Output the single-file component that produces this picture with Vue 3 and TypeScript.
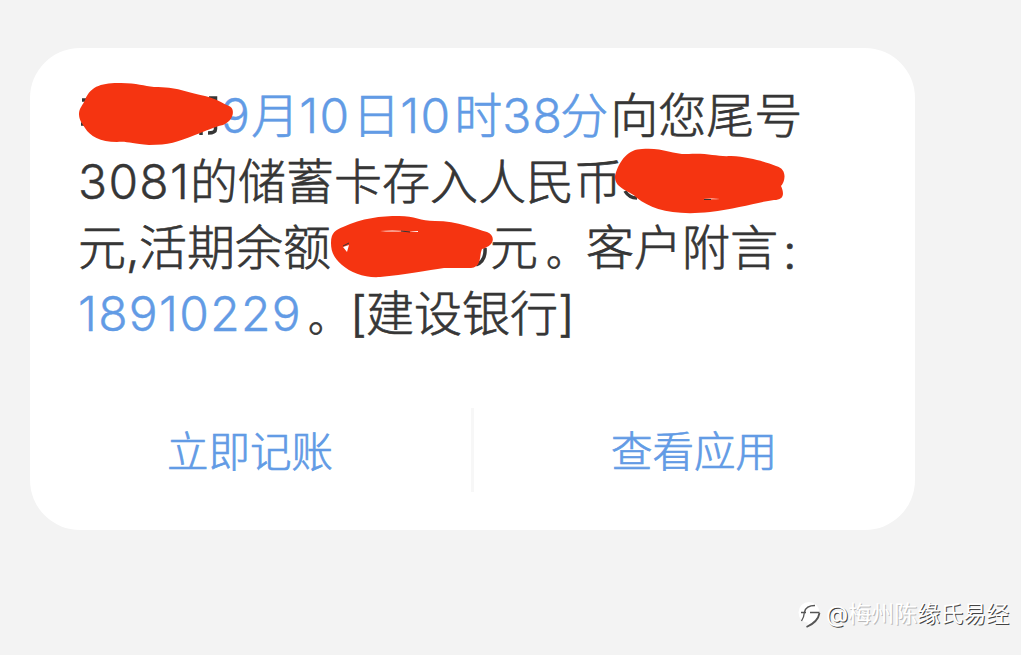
<template>
  <div class="page">
    <section class="card">
      <div class="message">
        <div v-for="(line, i) in lines" :key="i" class="line">
          <span
            v-for="(part, j) in line"
            :key="j"
            class="part"
            :class="part.kinds"
            :style="{ width: part.width + 'px' }"
            >{{ part.text }}</span
          >
        </div>
        <svg class="marks" viewBox="0 0 885 320" aria-hidden="true">
          <g class="stroke">
            <path d="M52 52H60M51 76H58M161 84L168 79M171 78V87M185.5 72V81Q185.5 85 178 85M179 50H185.5V57" />
            <path d="M595 143Q599 150 607 150M600 131V127M455 200Q456 213 446 217" />
          </g>
          <g class="red">
            <path
              d="M49 66C49 60 53 57 55 52C61 37 73 35 91 35C107 35 114 38 124 39C147 39 156 44 175 48C185 50 194 56 199 58C205 60 205 72 193 77C184 79 176 83 165 87C147 94 139 97 119 97C102 96 98 93 87 94C70 94 60 88 55 80C52 75 49 72 49 66Z"
            />
            <path
              d="M585 128C589 112 599 101 612 101C632 99 644 107 659 106C679 105 687 109 701 108C721 109 735 114 746 118C758 121 755 134 751 138C755 147 753 152 744 152C728 154 706 161 680 164C643 168 621 161 607 150C601 143 584 141 585 128Z"
            />
            <path
              d="M301 195C301 184 306 182 313 179C332 170 351 168 369 168C385 168 390 173 405 173C428 173 446 181 457 184C465 187 466 197 452 201C449 208 452 219 441 220L414 220C398 222 375 227 350 229C335 230 321 225 312 217C304 210 301 204 301 195Z"
            />
          </g>
          <path
            class="gap"
            d="M673 151Q682 150 690 151Q682 151.500 673 151ZM350 183Q362 182 375 183Q362 184 350 183ZM379 184Q386 183 388 183V184ZM313 199L319 197L317 204Z"
          />
          <path class="dark" d="M674 151.500H681M371 183L380 184M313 198L319 195" />
        </svg>
      </div>
      <div class="actions">
        <button type="button">立即记账</button>
        <i class="divider"></i>
        <button type="button">查看应用</button>
      </div>
    </section>
    <footer class="credit">
      <svg width="24" height="28" viewBox="0 0 24 28" aria-hidden="true">
        <circle class="disc" cx="11" cy="12.500" r="10.500" />
        <path class="disc" d="M10 22L9 27Q18 24 21 15Z" />
        <path class="edge" d="M3.500 21Q6 17 6.500 12Q8 5.500 17 5.500M3 12.500H8M12 12.500H21.500" />
        <path class="edge bold" d="M21.500 13Q20 22 8.500 27" />
      </svg>
      <span>@<span class="faint">梅州陈</span>缘氏易经</span>
    </footer>
  </div>
</template>

<script setup lang="ts">
interface Part {
  text: string;
  // width of the run in px, left out when the glyphs decide
  width?: number;
  kinds?: string[];
}

const lines: Part[][] = [
  [
    { text: '', width: 143 },
    { text: '9', kinds: ['link', 'digits'] },
    { text: '月', kinds: ['link'] },
    { text: '10', width: 53, kinds: ['link', 'digits'] },
    { text: '日', width: 48, kinds: ['link'] },
    { text: '10', width: 54, kinds: ['link', 'digits'] },
    { text: '时', width: 48, kinds: ['link'] },
    { text: '38', width: 58, kinds: ['link', 'digits'] },
    { text: '分', width: 50, kinds: ['link'] },
    { text: '向您尾号', width: 192 }
  ],
  [
    { text: '3081', width: 112, kinds: ['digits'] },
    { text: '的储蓄卡存入人民币', width: 432 }
  ],
  [
    { text: '元', width: 48 },
    { text: ',', width: 13 },
    { text: '活期余额', width: 192 },
    { text: '', width: 159 },
    { text: '元', width: 56 },
    { text: '。', width: 40, kinds: ['stop'] },
    { text: '客户附言', width: 197 },
    { text: ':', width: 20, kinds: ['colon'] }
  ],
  [
    { text: '18910229', width: 230, kinds: ['link', 'digits'] },
    { text: '。', width: 42, kinds: ['stop'] },
    { text: '[', width: 16 },
    { text: '建设银行', width: 192 },
    { text: ']', width: 18 }
  ]
];
</script>

<style>
body {
  background: #f3f3f3;
}
</style>

<style scoped>
.page {
  box-sizing: border-box;
  width: 1021px;
  height: 655px;
  padding: 48px 0 0 30px;
  overflow: hidden;
  background: #f3f3f3;
  font-family: Inter, 'Noto Sans CJK SC', sans-serif;
  font-weight: 300;
}

.card {
  box-sizing: border-box;
  width: 885px;
  height: 482px;
  padding-top: 35px;
  border-radius: 50px;
  background: #fff;
  -webkit-text-stroke: 0.7px currentColor;
}

.message {
  position: relative;
  height: 325px;
  padding-left: 48px;
  color: #363636;
  font-size: 48px;
}

.line {
  display: flex;
  height: 66px;
  line-height: 66px;
  white-space: nowrap;
}

.part {
  flex: none;
}

.link {
  color: #629be5;
}

.digits {
  letter-spacing: 1.3px;
  -webkit-text-stroke-width: 0.4px;
}

.stop {
  padding-top: 4px;
  font-size: 40px;
}

.colon {
  padding-top: 4px;
}

.marks {
  position: absolute;
  top: -35px;
  left: 0;
  width: 885px;
  height: 320px;
}

.stroke,
.dark {
  fill: none;
  stroke: #363636;
  stroke-width: 3.5;
}

.dark {
  stroke-width: 1;
}

.red {
  fill: #f53411;
}

.gap {
  fill: #fff;
}

.actions {
  display: flex;
  height: 84px;
}

button {
  flex: 1;
  padding: 0 1px 3px 0;
  border: 0;
  background: none;
  color: #629be5;
  font: inherit;
  font-size: 41.5px;
}

.divider {
  width: 3px;
  background: #f7f7f7;
}

.credit {
  display: flex;
  align-items: center;
  gap: 4px;
  height: 30px;
  margin: 69px 0 0 768px;
  color: #fff;
  font-size: 23px;
  font-weight: 400;
  line-height: 30px;
  white-space: nowrap;
  text-shadow: 1px 1px 0 #444;
}

.faint {
  text-shadow: 1px 1px 0 #bbb;
}

.disc {
  fill: #fff;
}

.edge {
  fill: none;
  stroke: #555;
  stroke-width: 1.3;
}

.bold {
  stroke-width: 1.8;
}
</style>
